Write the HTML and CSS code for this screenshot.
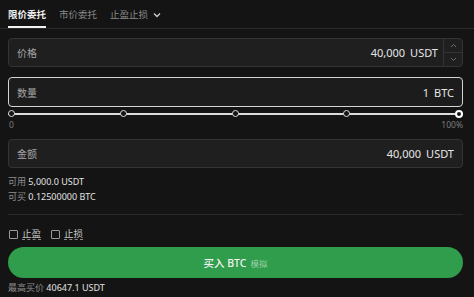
FILE: index.html
```html
<!DOCTYPE html>
<html lang="zh">
<head>
<meta charset="utf-8">
<link rel="stylesheet" href="styles.css">
</head>
<body>
<div class="tabs">
  <div class="tab active">限价委托</div>
  <div class="tab">市价委托</div>
  <div class="tab">止盈止损
    <svg class="chev" width="8" height="6" viewBox="0 0 8 6"><path d="M1 1.5 L4 4.5 L7 1.5" fill="none" stroke="#cfcfcf" stroke-width="1.3"/></svg>
  </div>
</div>
<div class="panel">
  <div class="field price">
    <span class="label">价格</span>
    <span class="value">40,000</span><span class="unit">USDT</span>
    <div class="stepper">
      <div class="step"><svg width="7" height="5" viewBox="0 0 7 5"><path d="M1 4 L3.5 1.5 L6 4" fill="none" stroke="#6f6f6f" stroke-width="1"/></svg></div>
      <div class="step"><svg width="7" height="5" viewBox="0 0 7 5"><path d="M1 1 L3.5 3.5 L6 1" fill="none" stroke="#6f6f6f" stroke-width="1"/></svg></div>
    </div>
  </div>
  <div class="field qty">
    <span class="label">数量</span>
    <span class="value">1</span><span class="unit">BTC</span>
  </div>
  <div class="slider">
    <div class="track">
      <span class="dot"></span><span class="dot"></span><span class="dot"></span><span class="dot"></span><span class="dot end"></span>
    </div>
    <div class="ticks"><span>0</span><span>100%</span></div>
  </div>
  <div class="field amount">
    <span class="label">金额</span>
    <span class="value">40,000</span><span class="unit">USDT</span>
  </div>
  <div class="info">
    <div><span class="k">可用</span> <span class="v">5,000.0 USDT</span></div>
    <div><span class="k">可买</span> <span class="v">0.12500000 BTC</span></div>
  </div>
  <div class="checks">
    <label class="check"><span class="box"></span><span class="cl">止盈</span></label>
    <label class="check"><span class="box"></span><span class="cl">止损</span></label>
  </div>
  <div class="buy">买入 BTC <span class="sim">模拟</span></div>
  <div class="foot"><span class="k">最高买价</span> <span class="v">40647.1 USDT</span></div>
</div>
</body>
</html>
```
FILE: styles.css
```css
* { box-sizing: border-box; }
html, body {
  margin: 0;
  background: #141414;
  font-family: "Noto Sans", "Noto Sans CJK SC", sans-serif;
  color: #e0e0e0;
}
.tabs {
  display: flex;
  height: 29px;
  padding: 0 8px;
  gap: 13px;
  border-bottom: 1px solid #2a2a2a;
}
.tab {
  display: flex;
  align-items: center;
  gap: 5px;
  font-size: 9.5px;
  color: #8a8a8a;
  padding-top: 2px;
  border-bottom: 2px solid transparent;
}
.tab.active {
  color: #f0f0f0;
  font-weight: 600;
  border-bottom-color: #f2f2f2;
}
.chev { margin-top: 1px; }
.panel {
  padding: 9px 11px 0 8px;
}
.field {
  display: flex;
  align-items: center;
  height: 29px;
  padding: 0 8px;
  border: 1px solid #343434;
  border-radius: 4px;
  background: #1f1f1f;
}
.field .label {
  font-size: 10px;
  color: #a5a5a5;
  flex: 1;
}
.field .value {
  font-size: 11px;
  color: #e6e6e6;
}
.field .unit {
  font-size: 11px;
  color: #e6e6e6;
  margin-left: 5px;
}
.field.price {
  padding-right: 0;
}
.stepper {
  display: flex;
  flex-direction: column;
  width: 19px;
  height: 100%;
  margin-left: 5px;
  border-left: 1px solid #343434;
}
.step {
  flex: 1;
  display: flex;
  align-items: center;
  justify-content: center;
}
.step + .step { border-top: 1px solid #343434; }
.field.qty {
  margin-top: 10px;
  height: 30px;
  border: 1.5px solid #d4d4d4;
  background: #1c1c1c;
}
.slider {
  margin-top: 2px;
}
.track {
  display: flex;
  justify-content: space-between;
  align-items: center;
  height: 9px;
  background: linear-gradient(#dcdcdc, #dcdcdc) center / 100% 2px no-repeat;
}
.dot {
  width: 7px;
  height: 7px;
  border-radius: 50%;
  border: 1.5px solid #dcdcdc;
  background: #141414;
}
.dot.end {
  width: 8px;
  height: 8px;
  border: 2.5px solid #ffffff;
}
.ticks {
  display: flex;
  justify-content: space-between;
  font-size: 8.5px;
  color: #7c7c7c;
  margin-top: 1px;
  padding-left: 1px;
}
.field.amount {
  margin-top: 9px;
}
.info {
  margin-top: 6px;
  font-size: 9px;
  line-height: 15px;
  padding-bottom: 10px;
  border-bottom: 1px solid #2a2a2a;
}
.k { color: #8e8e8e; }
.v { color: #e2e2e2; }
.checks {
  display: flex;
  gap: 10px;
  margin-top: 13px;
  padding-left: 1px;
}
.check {
  display: flex;
  align-items: center;
  gap: 4px;
  font-size: 9.5px;
  color: #c8c8c8;
}
.box {
  width: 9px;
  height: 9px;
  border: 1px solid #9a9a9a;
  border-radius: 1px;
}
.cl {
  border-bottom: 1px dashed #888;
  line-height: 11px;
}
.buy {
  margin-top: 7px;
  height: 31px;
  border-radius: 16px;
  background: #2f9d4b;
  display: flex;
  align-items: center;
  justify-content: center;
  gap: 4px;
  font-size: 10.5px;
  font-weight: 500;
  color: #f4f4f4;
}
.sim {
  font-size: 8.5px;
  font-weight: 400;
  color: #9ed0a8;
}
.foot {
  margin-top: 3px;
  font-size: 9px;
}
```
